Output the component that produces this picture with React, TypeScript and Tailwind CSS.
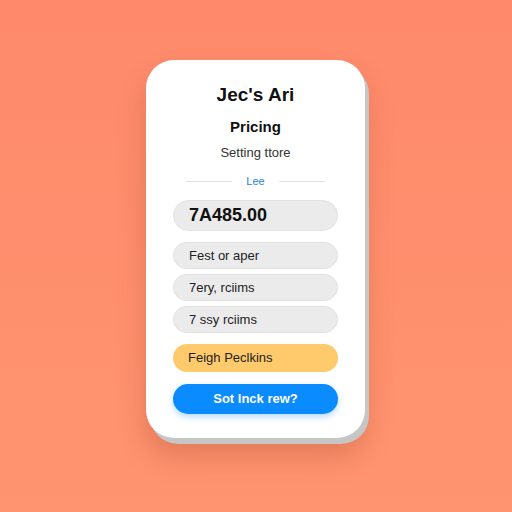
export default function App() {
  const rows = ["Fest or aper", "7ery, rciims", "7 ssy rciims"];
  return (
    <div
      className="w-[512px] h-[512px] bg-gradient-to-b from-[#fe8a6b] to-[#ff9470] pl-[146px] pt-[60px]"
      style={{ fontFamily: '"Liberation Sans", Arial, sans-serif' }}
    >
      <div className="w-[219px] h-[378px] bg-white rounded-[28px] shadow-[4px_6px_0_#c6c6c6,0_18px_28px_rgba(150,60,30,0.28)] px-[27px] pt-[23px] flex flex-col">
        <div className="h-6 leading-6 text-center text-[19px] font-bold text-[#111]">Jec's Ari</div>
        <div className="mt-[10px] h-5 leading-5 text-center text-[15px] font-bold text-[#111]">Pricing</div>
        <div className="mt-[7px] h-[18px] leading-[18px] text-center text-[13px] text-[#333]">Setting ttore</div>
        <div className="mt-[11px] h-4 flex items-center justify-center gap-[14px] px-[13px]">
          <div className="flex-1 h-px bg-[#e2e2e2]" />
          <span className="text-[11px] text-[#1f7fd6] leading-4">Lee</span>
          <div className="flex-1 h-px bg-[#e2e2e2]" />
        </div>
        <div className="mt-[11px] h-[31px] rounded-full bg-[#ebebeb] border border-[#e2e2e2] flex items-center pl-[15px] text-[18px] font-bold text-[#111]">
          7A485.00
        </div>
        <div className="mt-[11px] flex flex-col gap-[5px]">
          {rows.map((r) => (
            <div
              key={r}
              className="h-[27px] rounded-full bg-[#ebebeb] border border-[#e2e2e2] flex items-center pl-[15px] text-[13px] text-[#222]"
            >
              {r}
            </div>
          ))}
        </div>
        <div className="mt-[11px] h-[28px] rounded-full bg-[#ffca6c] flex items-center pl-[15px] text-[13px] text-[#222]">
          Feigh Peclkins
        </div>
        <div className="mt-[12px] h-[30px] rounded-full bg-[#0a8bff] shadow-[0_3px_6px_rgba(10,139,255,0.3)] flex items-center justify-center text-[13px] font-bold text-white">
          Sot lnck rew?
        </div>
      </div>
    </div>
  );
}
